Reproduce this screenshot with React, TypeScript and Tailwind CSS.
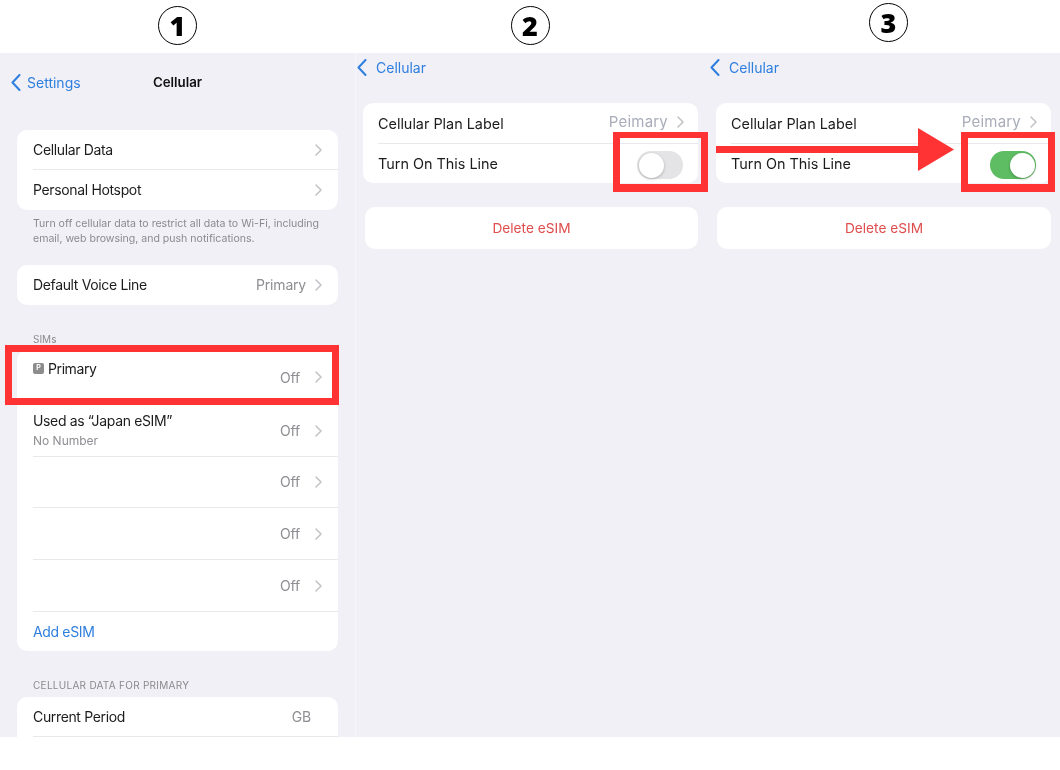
const chevronClass = 'w-[7px] h-[12px] text-[#c2c2c6] shrink-0';

function Chevron({ className = chevronClass }: { className?: string }) {
  return (
    <svg className={className} viewBox="0 0 7 12" fill="none" stroke="currentColor" strokeWidth={1.5} strokeLinecap="round" strokeLinejoin="round">
      <path d="M1 1l5 5-5 5" />
    </svg>
  );
}

function BackLink({ label, gap }: { label: string; gap: string }) {
  return (
    <div className={`flex items-center text-[#2f7fdf] ${gap}`}>
      <svg className="w-[10px] h-[17px]" viewBox="0 0 10 17" fill="none" stroke="currentColor" strokeWidth={2} strokeLinecap="round" strokeLinejoin="round">
        <path d="M8.5 1L1.5 8.5l7 7.5" />
      </svg>
      <span className="text-[14px]">{label}</span>
    </div>
  );
}

function StepNumber({ n }: { n: number }) {
  return (
    <div className="w-[39px] h-[39px] rounded-full border-[1.5px] border-black flex items-center justify-center font-['Open_Sans',sans-serif] text-[27px] font-extrabold text-black leading-none">
      {n}
    </div>
  );
}

interface RowProps {
  label?: string;
  value?: string;
  height: string;
  valueClass?: string;
  chevron?: boolean;
  last?: boolean;
}

function Row({ label, value, height, valueClass = '', chevron = true, last = false }: RowProps) {
  return (
    <div className={`ml-4 pr-4 flex items-center justify-between ${height} ${last ? '' : 'border-b border-[#e9e9ed]'}`}>
      <span className="text-[14px] leading-[20px] tracking-[-0.35px] text-[#1c1c1e]">{label}</span>
      <div className="flex items-center gap-[9px]">
        {value && <span className={`text-[14px] leading-[20px] tracking-[-0.2px] text-[#8e8e93] ${valueClass}`}>{value}</span>}
        {chevron && <Chevron />}
      </div>
    </div>
  );
}

function Toggle({ on }: { on: boolean }) {
  return (
    <div className={`w-[46px] h-[28px] mt-[3px] rounded-full p-[1.5px] flex ${on ? 'bg-[#5ebc62] justify-end' : 'bg-[#e4e4e6] justify-start'}`}>
      <div className="w-[25px] h-[25px] rounded-full bg-white shadow-[0_1px_3px_rgba(0,0,0,0.25)]" />
    </div>
  );
}

function SimList() {
  return (
    <div className="mx-[17px] w-[321px] bg-white rounded-[10px]">
      <div className="ml-4 pr-4 h-[55px] border-b border-[#e9e9ed] flex justify-between">
        <div className="flex items-start gap-[4px] pt-[9px]">
          <span className="mt-[4px] w-[11px] h-[11px] rounded-[2px] bg-[#8c8c8c] text-white text-[7px] font-bold flex items-center justify-center">P</span>
          <span className="text-[14px] leading-[20px] tracking-[-0.4px] text-[#1c1c1e]">Primary</span>
        </div>
        <div className="flex items-center gap-[9px]">
          <span className="text-[14px] tracking-[-0.2px] text-[#8e8e93] mt-[1px] mr-[6px]">Off</span>
          <Chevron />
        </div>
      </div>
      <div className="ml-4 pr-4 h-[52px] border-b border-[#e9e9ed] flex items-center justify-between">
        <div className="flex flex-col">
          <span className="text-[14px] tracking-[-0.35px] leading-[20px] text-[#1c1c1e]">Used as “Japan eSIM”</span>
          <span className="text-[12px] leading-[20px] text-[#8e8e93]">No Number</span>
        </div>
        <div className="flex items-center gap-[9px]">
          <span className="text-[14px] tracking-[-0.2px] text-[#8e8e93] mr-[6px]">Off</span>
          <Chevron />
        </div>
      </div>
      <Row value="Off" valueClass="mr-[6px]" height="h-[51px]" />
      <Row value="Off" valueClass="mr-[6px]" height="h-[52px]" />
      <Row value="Off" valueClass="mr-[6px]" height="h-[52px]" />
      <div className="ml-4 h-[39px] flex items-center text-[14px] tracking-[-0.35px] text-[#2f7fdf]">Add eSIM</div>
    </div>
  );
}

function OverviewPanel() {
  return (
    <section className="w-[355px] flex flex-col">
      <div className="h-[53px] pb-[3px] bg-white flex items-center justify-center">
        <StepNumber n={1} />
      </div>
      <div className="h-[684px] bg-[#f0f0f6] overflow-hidden">
        <div className="h-[59px] pl-[11px] relative flex items-center">
          <BackLink label="Settings" gap="gap-[6px]" />
          <span className="absolute inset-x-0 text-center text-[13.3px] font-semibold text-[#111]">Cellular</span>
        </div>
        <div className="mt-[18px] mx-[17px] w-[321px] bg-white rounded-[10px]">
          <Row label="Cellular Data" height="h-[40px]" />
          <Row label="Personal Hotspot" height="h-[40px]" last />
        </div>
        <p className="mt-[6px] ml-[33px] w-[295px] text-[10.55px] leading-[15px] text-[#8a8a8e]">
          Turn off cellular data to restrict all data to Wi-Fi, including email, web browsing, and push notifications.
        </p>
        <div className="mt-[19px] mx-[17px] w-[321px] bg-white rounded-[10px]">
          <Row label="Default Voice Line" value="Primary" height="h-[40px]" last />
        </div>
        <div className="mt-[28px] mb-[5px] mx-[33px] text-[10px] leading-[12px] text-[#8a8a8e]">SIMs</div>
        <SimList />
        <div className="mt-[28px] mb-[6px] mx-[33px] text-[10px] leading-[12px] tracking-[0.28px] text-[#8a8a8e]">CELLULAR DATA FOR PRIMARY</div>
        <div className="mx-[17px] w-[321px] bg-white rounded-[10px]">
          <Row label="Current Period" value="GB" valueClass="mr-[11px]" height="h-[40px]" chevron={false} />
          <div className="h-[40px]" />
        </div>
      </div>
    </section>
  );
}

interface LinePanelProps {
  n: number;
  on: boolean;
  width: string;
  numberClass: string;
  bodyClass?: string;
  navClass: string;
  cardClass: string;
  deleteClass: string;
}

function LinePanel({ n, on, width, numberClass, bodyClass = '', navClass, cardClass, deleteClass }: LinePanelProps) {
  return (
    <section className={`${width} flex flex-col`}>
      <div className={`h-[53px] bg-white flex items-center justify-center ${numberClass}`}>
        <StepNumber n={n} />
      </div>
      <div className={`h-[684px] bg-[#f0f0f6] ${bodyClass}`}>
        <div className={`h-[29px] flex items-center ${navClass}`}>
          <BackLink label="Cellular" gap="gap-[9px]" />
        </div>
        <div className={`mt-[21px] w-[335px] bg-white rounded-[10px] ${cardClass}`}>
          <div className="ml-[15px] pr-[14px] h-[41px] border-b border-[#e9e9ed] flex items-center justify-between">
            <span className="mt-[2px] text-[14.4px] text-[#1c1c1e]">Cellular Plan Label</span>
            <div className="flex items-center gap-[9px] -mt-[2px]">
              <span className="text-[15px] tracking-[0.2px] text-[#a9acb9]">Peimary</span>
              <Chevron />
            </div>
          </div>
          <div className="ml-[15px] pr-[15px] h-[39px] flex items-center justify-between">
            <span className="text-[14.4px] text-[#1c1c1e]">Turn On This Line</span>
            <Toggle on={on} />
          </div>
        </div>
        <div className={`mt-[24px] h-[42px] bg-white rounded-[10px] flex items-center justify-center text-[13.7px] text-[#df4d4d] ${deleteClass}`}>
          Delete eSIM
        </div>
      </div>
    </section>
  );
}

export default function App() {
  return (
    <div className="relative w-[1060px] h-[770px] bg-white overflow-hidden font-['Inter','Liberation_Sans',sans-serif]">
      <div className="flex blur-[0.3px]">
        <OverviewPanel />
        <LinePanel n={2} on={false} width="w-[350px]" numberClass="pb-[3px]" bodyClass="shadow-[inset_1px_0_0_#f6f6fa]" navClass="pl-[2px]" cardClass="ml-[8px]" deleteClass="ml-[10px] w-[333px]" />
        <LinePanel n={3} on width="w-[355px]" numberClass="pl-[12px] pb-[8px]" navClass="pl-[5px]" cardClass="ml-[11px]" deleteClass="ml-[12px] w-[334px]" />
      </div>

      {/* red callouts */}
      <div className="absolute left-[5px] top-[345px] w-[334px] h-[60px] border-[7px] border-[#ff3333]" />
      <div className="absolute left-[613px] top-[132px] w-[95px] h-[60px] border-[7px] border-t-[6px] border-b-[8px] border-[#ff3333]" />
      <div className="absolute left-[961px] top-[132px] w-[94px] h-[60px] border-[7px] border-t-[6px] border-b-[8px] border-[#ff3333]" />
      <svg className="absolute left-[716px] top-[128px] w-[238px] h-[43px]" viewBox="0 0 238 43" fill="#ff3333">
        <path d="M0 18h202V0l36 21.5-36 21.5V25H0z" />
      </svg>
    </div>
  );
}
